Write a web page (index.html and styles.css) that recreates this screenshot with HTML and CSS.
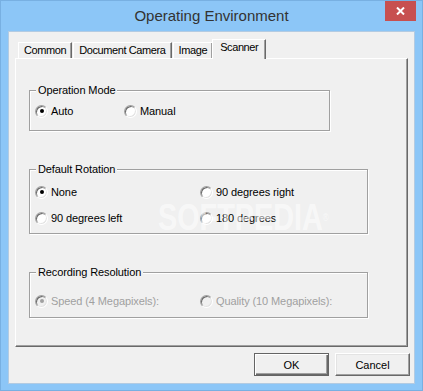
FILE: index.html
```html
<!DOCTYPE html>
<html lang="en">

<head>
    <meta charset="UTF-8">
    <meta name="viewport" content="width=device-width, initial-scale=1.0">
    <title>Operating Environment</title>
    <link rel="stylesheet" href="styles.css">
</head>

<body>
    <div class="window">
        <div class="titlebar">
            <div class="title">Operating Environment</div>
            <div class="close">
                <svg width="9" height="8" viewBox="0 0 9 8">
                    <path d="M1 0.5 L8 7.5 M8 0.5 L1 7.5" stroke="#fff" stroke-width="2" fill="none" />
                </svg>
            </div>
        </div>

        <div class="client">
            <div class="tabs">
                <div class="tab">Common</div>
                <div class="tab">Document Camera</div>
                <div class="tab">Image</div>
                <div class="tab selected">Scanner</div>
            </div>

            <div class="panel">
                <div class="group group-mode">
                    <div class="group-title">Operation Mode</div>
                    <div class="options">
                        <div class="radio"><span class="dot checked"></span>Auto</div>
                        <div class="radio"><span class="dot"></span>Manual</div>
                    </div>
                </div>

                <div class="group group-wide">
                    <div class="group-title">Default Rotation</div>
                    <div class="options">
                        <div class="radio"><span class="dot checked"></span>None</div>
                        <div class="radio"><span class="dot"></span>90 degrees right</div>
                        <div class="radio"><span class="dot"></span>90 degrees left</div>
                        <div class="radio"><span class="dot"></span>180 degrees</div>
                    </div>
                </div>

                <div class="group group-wide group-res">
                    <div class="group-title">Recording Resolution</div>
                    <div class="options">
                        <div class="radio disabled"><span class="dot checked"></span>Speed (4 Megapixels):</div>
                        <div class="radio disabled"><span class="dot"></span>Quality (10 Megapixels):</div>
                    </div>
                </div>

                <div class="watermark">SOFTPEDIA<span class="reg">®</span></div>
            </div>

            <div class="buttons">
                <button class="btn btn-default">OK</button>
                <button class="btn">Cancel</button>
            </div>
        </div>
    </div>
</body>

</html>
```

FILE: styles.css
```css
body {
    margin: 0;
    padding: 0;
    font-family: "Liberation Sans", Arial, sans-serif;
    font-size: 11px;
    color: #000;
    background-color: #8cc6f7;
}

.window {
    width: 423px;
    height: 391px;
    box-sizing: border-box;
    background-color: #8cc6f7;
    border: 1px solid #78b0e2;
    display: flex;
    flex-direction: column;
}

/* Title bar */

.titlebar {
    height: 30px;
    display: flex;
    padding: 0 6px 0 37px;
}

.title {
    flex: 1;
    text-align: center;
    font-size: 15px;
    line-height: 30px;
    color: #333;
}

.close {
    width: 31px;
    height: 20px;
    background-color: #c75050;
    display: flex;
    align-items: center;
    justify-content: center;
}

/* Client area */

.client {
    flex: 1;
    margin: 0 7px 7px 7px;
    background-color: #f0f0f0;
    border: 1px solid #b3cbe2;
    padding: 7px 6px;
    display: flex;
    flex-direction: column;
}

.tabs {
    height: 19px;
    display: flex;
    align-items: flex-end;
    padding-left: 3px;
}

.tab {
    position: relative;
    height: 16px;
    box-sizing: border-box;
    padding: 0 5px;
    margin-right: 1px;
    line-height: 14px;
    letter-spacing: -0.4px;
    background-color: #f0f0f0;
    border: 1px solid;
    border-color: #fff #696969 transparent #fff;
    border-bottom: none;
    box-shadow: inset -1px 0 0 #a0a0a0;
}

.tab.selected {
    height: 20px;
    margin: 0 -2px -1px -2px;
    padding: 0 7px;
    z-index: 1;
}

.panel {
    position: relative;
    height: 289px;
    box-sizing: border-box;
    padding: 0 13px;
    border: 1px solid;
    border-color: #fff #696969 #696969 #fff;
    box-shadow: inset -1px -1px 0 #a0a0a0;
    overflow: hidden;
}

/* Group boxes */

.group {
    margin-top: 38px;
    border: 1px solid #a0a0a0;
    box-shadow: 1px 1px 0 #fff, inset 1px 1px 0 #fff;
}

.group-title {
    width: fit-content;
    height: 14px;
    margin: -8px 0 0 6px;
    padding: 0 2px;
    line-height: 14px;
    letter-spacing: -0.1px;
    background-color: #f0f0f0;
}

.options {
    display: grid;
    row-gap: 12px;
    padding-left: 5px;
}

.group-mode {
    width: 299px;
    margin-top: 31px;
}

.group-mode .options {
    grid-template-columns: 89px auto;
    padding-top: 7px;
    padding-bottom: 12px;
}

.group-wide {
    width: 337px;
}

.group-wide .options {
    grid-template-columns: 165px auto;
    padding-top: 9px;
    padding-bottom: 8px;
}

.group-res .options {
    padding-top: 15px;
    padding-bottom: 9px;
}

.radio {
    display: flex;
    align-items: center;
    gap: 3px;
    height: 14px;
    line-height: 14px;
    letter-spacing: -0.1px;
    white-space: nowrap;
}

.dot {
    width: 13px;
    height: 13px;
    box-sizing: border-box;
    border-radius: 50%;
    background-color: #fff;
    border: 1px solid;
    border-color: #a0a0a0 #fff #fff #a0a0a0;
    box-shadow: inset 1px 1px 0 #696969, inset -1px -1px 0 #e3e3e3;
    display: flex;
    align-items: center;
    justify-content: center;
}

.dot.checked::after {
    content: "";
    width: 4px;
    height: 4px;
    border-radius: 50%;
    background-color: #000;
}

.radio.disabled {
    color: #a0a0a0;
}

.radio.disabled .dot {
    background-color: #f0f0f0;
}

.radio.disabled .dot.checked::after {
    background-color: #a0a0a0;
}

.watermark {
    position: absolute;
    left: 142px;
    top: 141px;
    font-size: 36px;
    line-height: 36px;
    font-weight: bold;
    color: rgba(255, 255, 255, 0.55);
    transform: scaleX(0.8);
    transform-origin: left top;
    pointer-events: none;
}

.watermark .reg {
    font-size: 10px;
    vertical-align: top;
    font-weight: normal;
}

/* Buttons */

.buttons {
    margin-top: 6px;
    margin-right: -2px;
    display: flex;
    justify-content: flex-end;
    gap: 6px;
}

.btn {
    width: 75px;
    height: 23px;
    box-sizing: border-box;
    padding: 0;
    font-family: inherit;
    font-size: 11px;
    color: #000;
    background-color: #f0f0f0;
    border: 1px solid;
    border-color: #fff #696969 #696969 #fff;
    box-shadow: inset -1px -1px 0 #a0a0a0, inset 1px 1px 0 #e3e3e3;
}

.btn-default {
    border-color: #646464;
    box-shadow: inset 1px 1px 0 #fff, inset -1px -1px 0 #696969, inset -2px -2px 0 #a0a0a0;
}
```
